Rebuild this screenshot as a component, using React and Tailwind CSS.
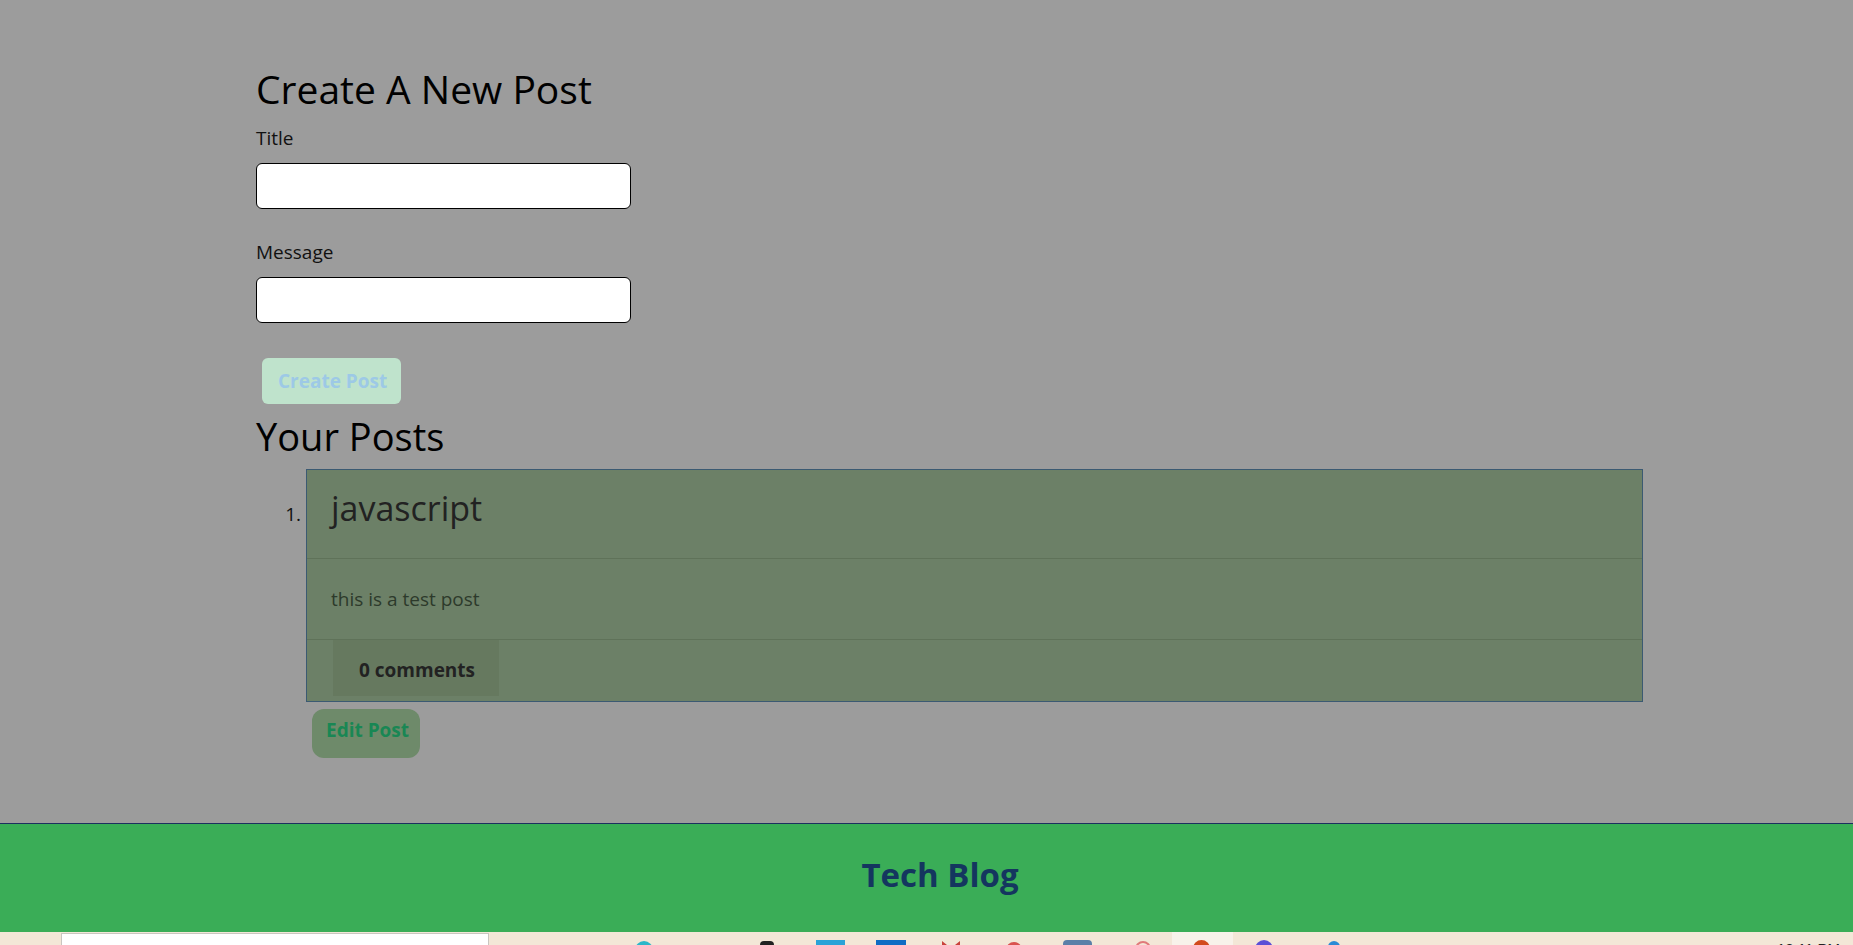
export default function App() {
    return (
        <div className="h-[945px] overflow-hidden flex flex-col bg-[#9c9c9c] font-['Open_Sans',sans-serif]">
            <main className="flex-1 pl-[256px] pt-[67px]">
                <h1 className="text-[39px] leading-[44px] text-black">Create A New Post</h1>
                <form className="flex flex-col">
                    <label className="mt-[15px] text-[19px] leading-[24px] text-[#111]">Title</label>
                    <input className="mt-[13px] w-[375px] h-[46px] bg-white border border-black rounded-md" />
                    <label className="mt-[31px] text-[19px] leading-[24px] text-[#111]">Message</label>
                    <input className="mt-[13px] w-[375px] h-[46px] bg-white border border-black rounded-md" />
                    <div className="mt-[35px]">
                        <button type="button" className="ml-[6px] w-[139px] h-[46px] bg-[#bfe3cc] text-[#9dc9e6] font-bold text-[19px] rounded-md text-left pl-[16px]">
                            Create Post
                        </button>
                    </div>
                </form>
                <h2 className="mt-[10px] text-[38px] leading-[44px] text-black">Your Posts</h2>
                <ol className="list-decimal pl-[50px] mt-[11px] text-[19px] text-[#111]">
                    <li>
                        <div className="w-[1337px] bg-[#6c8067] border border-[#3b5a72]">
                            <div className="px-[24px] pt-[18px] pb-[30px] border-b border-[#5f7259]">
                                <h3 className="text-[34px] leading-[40px] text-[#222]">javascript</h3>
                            </div>
                            <div className="px-[24px] pt-[26px] pb-[26px] border-b border-[#5f7259]">
                                <p className="text-[19px] leading-[28px] text-[#2d3a2b]">this is a test post</p>
                            </div>
                            <div className="px-[26px] h-[61px]">
                                <div className="inline-block h-[56px] bg-[#66795f] pl-[26px] pr-[24px] pt-[16px]">
                                    <span className="text-[19px] leading-[28px] font-bold text-[#222]">0 comments</span>
                                </div>
                            </div>
                        </div>
                        <button type="button" className="mt-[7px] ml-[6px] w-[108px] h-[49px] bg-[#6e8a6a] text-[#198754] font-bold text-[19px] leading-[28px] rounded-xl text-left pl-[14px] pb-[7px]">
                            Edit Post
                        </button>
                    </li>
                </ol>
            </main>
            <footer className="h-[109px] bg-[#3aad57] border-t border-[#1b2f5e] flex items-center justify-center pl-[27px]">
                <h2 className="text-[33px] font-bold text-[#14365f] leading-[40px] -mt-[7px]">Tech Blog</h2>
            </footer>
            <div className="h-[13px] bg-[#f3e7d7] overflow-hidden flex items-start">
                <div className="ml-[61px] mt-[1px] w-[428px] h-[20px] shrink-0 bg-white border border-[#c9c6c0]" />
                <span className="ml-[146px] mt-[9px] w-[18px] h-[18px] shrink-0 rounded-full bg-[#2bb7c9]" />
                <span className="ml-[107px] mt-[9px] w-[14px] h-[18px] shrink-0 rounded-t bg-[#222]" />
                <span className="ml-[42px] mt-[8px] w-[29px] h-[18px] shrink-0 bg-[#2aa3d8]" />
                <span className="ml-[31px] mt-[8px] w-[30px] h-[18px] shrink-0 bg-[#0f6cc4]" />
                <span className="ml-[36px] mt-[9px] w-[18px] h-[18px] shrink-0 bg-[#c9423b] [clip-path:polygon(0_0,50%_40%,100%_0,100%_100%,0_100%)]" />
                <span className="ml-[46px] mt-[10px] w-[16px] h-[16px] shrink-0 rounded-full bg-[#d9534f]" />
                <span className="ml-[41px] mt-[8px] w-[29px] h-[18px] shrink-0 rounded-sm bg-[#5b7fa8]" />
                <span className="ml-[43px] mt-[9px] w-[16px] h-[16px] shrink-0 rounded-full border-2 border-[#e07a7a]" />
                <div className="ml-[21px] w-[61px] h-[13px] shrink-0 bg-[#f8f2ea] pl-[21px] pt-[8px]">
                    <div className="w-[17px] h-[17px] rounded-full bg-[#d24a1c]" />
                </div>
                <span className="ml-[22px] mt-[8px] w-[18px] h-[18px] shrink-0 rounded-full bg-[#5b4fd6]" />
                <span className="ml-[55px] mt-[9px] w-[12px] h-[16px] shrink-0 rounded-t-full bg-[#2a8bd6]" />
                <span className="ml-auto mr-[13px] mt-[8px] text-[15px] leading-[18px] text-[#222] font-['Liberation_Sans',sans-serif]">12:11 PM</span>
            </div>
        </div>
    )
}
